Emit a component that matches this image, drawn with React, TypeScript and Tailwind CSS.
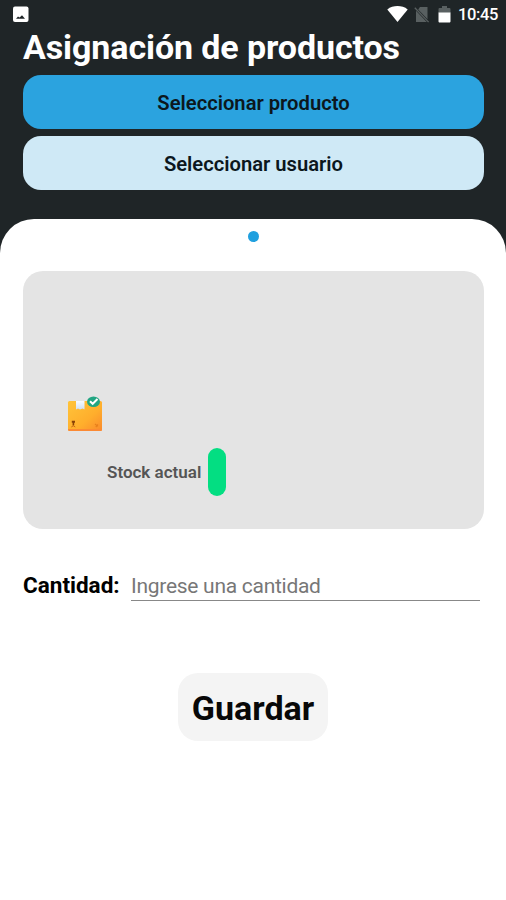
import type { ReactNode } from "react";

function StatusBar() {
  return (
    <div className="flex h-[28px] items-center justify-between pl-[12px] pr-[8px]">
      <svg width="17" height="17" viewBox="0 0 17 17" aria-hidden="true">
        <rect x="1" y="0.5" width="15.5" height="15.5" rx="2" fill="#fff" />
        <path d="M4 12.8l2-2.4 1.6 1L10 9.2l3 3.6z" fill="#1f2527" />
      </svg>
      <div className="flex items-center">
        <svg width="21" height="16" viewBox="0 0 21 16" aria-hidden="true">
          <path d="M0.3 3.4C6.2-1 14.8-1 20.7 3.4L10.5 16z" fill="#fff" />
        </svg>
        <svg className="ml-[6px]" width="16" height="17" viewBox="0 0 16 17" fill="#596061" aria-hidden="true">
          <path d="M6 1H13.5v12.2L4.2 3.4z" />
          <path d="M2 4.8l10.8 11.3H2z" />
          <path d="M0.8 1.8l13.8 14.3" stroke="#596061" strokeWidth="1.3" />
        </svg>
        <svg className="ml-[8px]" width="13" height="17" viewBox="0 0 13 17" aria-hidden="true">
          <path d="M4 0h5v2h2.2c.8 0 1.3.5 1.3 1.3V7H.5V3.3C.5 2.5 1 2 1.8 2H4z" fill="#596061" />
          <path d="M.5 6.5h12v8.7c0 .8-.5 1.3-1.3 1.3H1.8c-.8 0-1.3-.5-1.3-1.3z" fill="#fff" />
        </svg>
        <span className="ml-[7px] w-[40px] pt-[2px] text-[16.5px] leading-[20px] font-medium tracking-[-0.4px]">
          10:45
        </span>
      </div>
    </div>
  );
}

function SelectButton({ className, children }: { className: string; children: ReactNode }) {
  return (
    <button
      type="button"
      className={`h-[54px] w-full rounded-[18px] pt-[2px] text-[20.2px] font-semibold text-[#0c171d] ${className}`}
    >
      {children}
    </button>
  );
}

function BoxIcon() {
  return (
    <svg width="36" height="36" viewBox="0 0 36 36" aria-hidden="true">
      <defs>
        <linearGradient id="box" x1="0" y1="0" x2="1" y2="1">
          <stop offset="0" stopColor="#ffc43a" />
          <stop offset="0.6" stopColor="#ffae2c" />
          <stop offset="1" stopColor="#fa8a2c" />
        </linearGradient>
        <linearGradient id="tape" x1="0" y1="0" x2="0" y2="1">
          <stop offset="0" stopColor="#f8fbff" />
          <stop offset="1" stopColor="#cfe0f5" />
        </linearGradient>
      </defs>
      <rect x="1" y="5" width="34" height="30" rx="1.5" fill="url(#box)" />
      <path d="M1 33h34v.5c0 .8-.7 1.5-1.5 1.5h-31C1.7 35 1 34.3 1 33.5z" fill="#fb8a34" />
      <path d="M9 5h8.5v8.5l-2-1-2.5 1-2-1-2 1z" fill="url(#tape)" />
      <path d="M4.8 24.8h3.2v2H7.200V29.500h-1.600V26.800h-.8z" fill="#8a4206" />
      <path d="M4.300 31l2-1.200 2 1.200" stroke="#c96a14" fill="none" />
      <path d="M28 28l2.8 2.4M31 28.5l-2.2 2.500" stroke="#e8811c" strokeWidth="1.2" />
      <ellipse cx="26.5" cy="5.8" rx="6.5" ry="5.3" fill="#22a582" />
      <path d="M23 5.2l2.7 2.6L30.5 3" stroke="#fff" strokeWidth="2" fill="none" />
    </svg>
  );
}

export default function App() {
  return (
    <div className="flex h-[900px] w-[506px] flex-col overflow-hidden bg-[#1f2527] font-['Roboto',sans-serif] text-white">
      <StatusBar />
      <header className="h-[191px] shrink-0 px-[23px]">
        <h1 className="h-[47px] text-[34px] leading-[38px] font-bold tracking-[-0.1px] whitespace-nowrap">
          Asignación de productos
        </h1>
        <div className="flex w-[461px] flex-col gap-[7px]">
          <SelectButton className="bg-[#2ba3df]">Seleccionar producto</SelectButton>
          <SelectButton className="bg-[#cfe9f6]">Seleccionar usuario</SelectButton>
        </div>
      </header>

      <main className="flex flex-1 flex-col rounded-t-[34px] bg-white px-[23px] pt-[12px] text-black">
        <span className="size-[11px] self-center rounded-full bg-[#20a0df]" />

        <section className="mt-[29px] h-[258px] w-[461px] rounded-[20px] bg-[#e4e4e4] pt-[125px] pl-[44px]">
          <BoxIcon />
          <div className="mt-[16px] ml-[40px] flex items-center">
            <span className="w-[101px] pt-[2px] text-[17px] font-semibold whitespace-nowrap text-[#555]">
              Stock actual
            </span>
            <span className="h-[48px] w-[18px] rounded-full bg-[#03de82]" />
          </div>
        </section>

        <label className="mt-[38px] flex h-[34px] items-start">
          <span className="w-[108px] text-[22.5px] leading-[36px] font-bold">Cantidad:</span>
          <input
            className="h-[34px] w-[349px] border-b border-[#888] pt-[4px] text-[21px] tracking-[-0.28px] outline-none placeholder:text-[#777]"
            placeholder="Ingrese una cantidad"
          />
        </label>

        <button
          type="button"
          className="mt-[72px] h-[68px] w-[150px] self-center rounded-[20px] bg-[#f4f4f4] pt-[2px] text-[34px] font-bold text-[#080808]"
        >
          Guardar
        </button>
      </main>
    </div>
  );
}
